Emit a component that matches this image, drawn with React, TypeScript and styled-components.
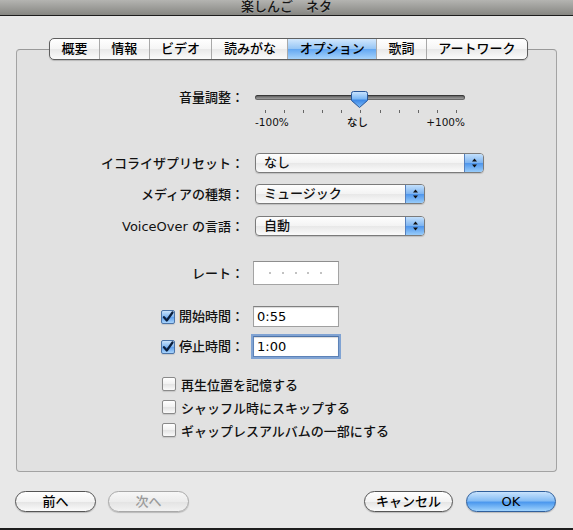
import React from "react";
import styled, { createGlobalStyle } from "styled-components";

const GlobalStyle = createGlobalStyle`
  html, body {
    margin: 0;
    padding: 0;
  }
  body {
    background: #e8e8e8;
    font-family: "DejaVu Sans", "Noto Sans CJK JP", sans-serif;
    font-weight: 500;
    color: #111;
  }
`;

const Window = styled.div`
  width: 573px;
  height: 530px;
  display: flex;
  flex-direction: column;
  background: #e8e8e8;
  overflow: hidden;
`;

const TitleBar = styled.div`
  height: 15px;
  flex-shrink: 0;
  border-bottom: 1px solid #1c1c1c;
  background: linear-gradient(#b4b4b1, #868682);
  display: flex;
  justify-content: center;
  font-size: 13px;
  line-height: 13px;
  color: #151515;
  text-shadow: 0 1px 0 rgba(255, 255, 255, 0.2);
`;

const Main = styled.div`
  display: flex;
  flex-direction: column;
  padding: 22px 16px 0;
`;

const TabRow = styled.div`
  display: flex;
  justify-content: center;
  padding-left: 4px;
  position: relative;
  z-index: 1;
`;

const TabStrip = styled.div`
  display: flex;
  height: 22px;
  box-sizing: border-box;
  border: 1px solid #5e5e5e;
  border-radius: 5px;
  overflow: hidden;
  background: linear-gradient(#ffffff, #f5f5f5 50%, #e9e9e9 52%, #fbfbfb);
  box-shadow: 0 1px 1px rgba(0, 0, 0, 0.18);
`;

const Tab = styled.div<{ $active?: boolean }>`
  padding: 0 11.4px;
  font-size: 13px;
  line-height: 20px;
  color: #000;
  white-space: nowrap;
  & + & {
    border-left: 1px solid #a9a9a9;
  }
  background: ${(p) =>
    p.$active
      ? "linear-gradient(#d2e8fd, #97c6f5 48%, #64a8f2 52%, #a6d3fb)"
      : "transparent"};
`;

const Panel = styled.div`
  margin-top: -11px;
  height: 423px;
  box-sizing: border-box;
  border: 1px solid #a3a3a3;
  border-top-color: #999;
  border-radius: 4px;
  background: #e1e1e1;
  padding-top: 39px;
  display: flex;
  flex-direction: column;
`;

const Row = styled.div<{ $top?: number; $gap?: number; $start?: boolean }>`
  display: flex;
  align-items: ${(p) => (p.$start ? "flex-start" : "center")};
  gap: ${(p) => p.$gap ?? 11}px;
  margin-top: ${(p) => p.$top ?? 0}px;
`;

const Label = styled.div<{ $h?: number }>`
  width: 227px;
  flex-shrink: 0;
  display: flex;
  justify-content: flex-end;
  align-items: center;
  gap: 4px;
  font-size: 13px;
  line-height: ${(p) => p.$h ?? 17}px;
  white-space: nowrap;
`;

const SliderBox = styled.div`
  width: 210px;
  display: flex;
  flex-direction: column;
`;

const TrackArea = styled.div`
  position: relative;
  height: 19px;
  padding-top: 6px;
  box-sizing: border-box;
`;

const Track = styled.div`
  height: 5px;
  border-radius: 3px;
  background: linear-gradient(#4c4c4c, #8c8c8c 60%, #a8a8a8);
  box-shadow: inset 0 0 0 1px rgba(0, 0, 0, 0.35);
`;

const Knob = styled.svg`
  position: absolute;
  left: 96px;
  top: 2px;
`;

const Ticks = styled.div`
  display: flex;
  justify-content: space-between;
  padding: 0 8px 0 10px;
  margin-top: 2px;
  height: 3px;
`;

const Tick = styled.div`
  width: 1px;
  background: #666;
`;

const TickLabels = styled.div`
  display: flex;
  justify-content: space-between;
  margin-top: 4px;
  font-size: 10.5px;
  line-height: 11px;
  color: #111;
`;

const Popup = styled.div<{ $w: number }>`
  width: ${(p) => p.$w}px;
  height: 20px;
  box-sizing: border-box;
  border: 1px solid #7b7b7b;
  border-radius: 4px;
  display: flex;
  overflow: hidden;
  background: linear-gradient(#fefefe, #f3f3f3 50%, #e8e8e8 52%, #fbfbfb);
  box-shadow: 0 1px 1px rgba(0, 0, 0, 0.15);
`;

const PopupText = styled.div`
  flex: 1;
  padding-left: 8px;
  font-size: 13px;
  line-height: 18px;
`;

const PopupArrows = styled.div`
  width: 18px;
  border-left: 1px solid #5580bd;
  background: linear-gradient(#c3e0fc, #7fb5f1 48%, #4f96ec 52%, #98ccfa);
  display: flex;
  align-items: center;
  justify-content: center;
`;

const RatingBox = styled.div`
  width: 86px;
  height: 24px;
  box-sizing: border-box;
  border: 1px solid #a4a4a4;
  border-top-color: #8e8e8e;
  background: #fff;
  display: flex;
  align-items: center;
  gap: 10.75px;
  padding-left: 15px;
`;

const Dot = styled.div`
  width: 2px;
  height: 2px;
  background: #c2c2c2;
`;

const TextField = styled.input<{ $focused?: boolean }>`
  width: 86px;
  height: 21px;
  box-sizing: border-box;
  margin: 0;
  border: 1px solid ${(p) => (p.$focused ? "#5d83b8" : "#a0a0a0")};
  border-top-color: ${(p) => (p.$focused ? "#4d73a8" : "#808080")};
  background: #fff;
  padding: 0 3px;
  font-family: "DejaVu Sans", sans-serif;
  font-size: 13px;
  color: #000;
  outline: none;
  box-shadow: ${(p) =>
    p.$focused
      ? "0 0 0 2px rgba(110, 152, 208, 0.85), inset 0 1px 1px rgba(0,0,0,0.15)"
      : "inset 0 1px 1px rgba(0, 0, 0, 0.15)"};
`;

const Box = styled.div<{ $checked?: boolean }>`
  width: 14px;
  height: 14px;
  box-sizing: border-box;
  border: 1px solid ${(p) => (p.$checked ? "#4c74a8" : "#8a8a8a")};
  border-radius: 2px;
  background: ${(p) =>
    p.$checked
      ? "linear-gradient(#c9e3fc, #7fb5f1 50%, #5d9fee 52%, #a9d4fb)"
      : "linear-gradient(#ffffff, #f1f1f1 50%, #e4e4e4 52%, #fafafa)"};
  display: flex;
  align-items: center;
  justify-content: center;
  flex-shrink: 0;
  box-shadow: 0 1px 1px rgba(0, 0, 0, 0.12);
`;

const Options = styled.div`
  display: flex;
  flex-direction: column;
  gap: 5px;
  margin-top: 18px;
  padding-left: 145px;
`;

const OptionRow = styled.div`
  display: flex;
  align-items: center;
  gap: 5px;
  height: 18px;
  font-size: 13px;
  white-space: nowrap;
`;

const Footer = styled.div`
  flex: 1;
  display: flex;
  align-items: center;
  justify-content: space-between;
  padding: 2px 17px 0 15px;
`;

const ButtonGroup = styled.div<{ $gap: number }>`
  display: flex;
  gap: ${(p) => p.$gap}px;
`;

const PushButton = styled.div<{ $w: number; $kind?: "primary" | "disabled" }>`
  width: ${(p) => p.$w}px;
  height: 21px;
  box-sizing: border-box;
  border-radius: 11px;
  border: 1px solid
    ${(p) =>
      p.$kind === "primary" ? "#2f5f9c" : p.$kind === "disabled" ? "#a9a9a9" : "#555"};
  background: ${(p) =>
    p.$kind === "primary"
      ? "linear-gradient(#c8e3fd, #86bdf5 45%, #4d99ee 55%, #9fd3fd)"
      : p.$kind === "disabled"
      ? "linear-gradient(#f7f7f7, #ececec 50%, #e3e3e3 52%, #f2f2f2)"
      : "linear-gradient(#ffffff, #f3f3f3 50%, #e4e4e4 52%, #fbfbfb)"};
  color: ${(p) => (p.$kind === "disabled" ? "#9a9a9a" : "#000")};
  font-size: 13px;
  line-height: 19px;
  text-align: center;
  box-shadow: 0 1px 1px rgba(0, 0, 0, 0.2);
`;

const BottomEdge = styled.div`
  height: 2px;
  flex-shrink: 0;
  background: #1e1e1e;
`;

const Arrows = () => (
  <svg width="7" height="12" viewBox="0 0 7 12">
    <path d="M3.5 1.5 L6 4.5 H1 Z" fill="#111" />
    <path d="M3.5 10.5 L6 7.5 H1 Z" fill="#111" />
  </svg>
);

const Check = () => (
  <svg width="12" height="12" viewBox="0 0 12 12">
    <path
      d="M2 6.2 L4.8 9.5 L10.5 1.5"
      fill="none"
      stroke="#0c1f3d"
      strokeWidth="2.2"
      strokeLinecap="round"
      strokeLinejoin="round"
    />
  </svg>
);

const tabs = ["概要", "情報", "ビデオ", "読みがな", "オプション", "歌詞", "アートワーク"];

export default function App() {
  return (
    <Window>
      <GlobalStyle />
      <TitleBar>楽しんご　ネタ</TitleBar>
      <Main>
        <TabRow>
          <TabStrip>
            {tabs.map((t) => (
              <Tab key={t} $active={t === "オプション"}>
                {t}
              </Tab>
            ))}
          </TabStrip>
        </TabRow>
        <Panel>
          <Row $start>
            <Label $h={17}>音量調整：</Label>
            <SliderBox>
              <TrackArea>
                <Track />
                <Knob width="17" height="17" viewBox="0 0 17 17">
                  <defs>
                    <linearGradient id="kg" x1="0" y1="0" x2="0" y2="1">
                      <stop offset="0" stopColor="#cde6ff" />
                      <stop offset="0.45" stopColor="#7db8f5" />
                      <stop offset="0.55" stopColor="#3f8ae6" />
                      <stop offset="1" stopColor="#7bbaf7" />
                    </linearGradient>
                  </defs>
                  <path
                    d="M2.5 0.5 H14.5 Q16.5 0.5 16.5 2.5 V9.5 L8.5 16.5 L0.5 9.5 V2.5 Q0.5 0.5 2.5 0.5 Z"
                    fill="url(#kg)"
                    stroke="#29579a"
                  />
                </Knob>
              </TrackArea>
              <Ticks>
                {Array.from({ length: 11 }).map((_, i) => (
                  <Tick key={i} />
                ))}
              </Ticks>
              <TickLabels>
                <span>-100%</span>
                <span>なし</span>
                <span>+100%</span>
              </TickLabels>
            </SliderBox>
          </Row>

          <Row $top={25}>
            <Label>イコライザプリセット：</Label>
            <Popup $w={229}>
              <PopupText>なし</PopupText>
              <PopupArrows>
                <Arrows />
              </PopupArrows>
            </Popup>
          </Row>
          <Row $top={11}>
            <Label>メディアの種類：</Label>
            <Popup $w={170}>
              <PopupText>ミュージック</PopupText>
              <PopupArrows>
                <Arrows />
              </PopupArrows>
            </Popup>
          </Row>
          <Row $top={12}>
            <Label>VoiceOver の言語：</Label>
            <Popup $w={170}>
              <PopupText>自動</PopupText>
              <PopupArrows>
                <Arrows />
              </PopupArrows>
            </Popup>
          </Row>

          <Row $top={25} $gap={9}>
            <Label>レート：</Label>
            <RatingBox>
              {Array.from({ length: 5 }).map((_, i) => (
                <Dot key={i} />
              ))}
            </RatingBox>
          </Row>

          <Row $top={21} $gap={9}>
            <Label>
              <Box $checked>
                <Check />
              </Box>
              開始時間：
            </Label>
            <TextField defaultValue="0:55" readOnly />
          </Row>
          <Row $top={9} $gap={9}>
            <Label>
              <Box $checked>
                <Check />
              </Box>
              停止時間：
            </Label>
            <TextField defaultValue="1:00" readOnly $focused />
          </Row>

          <Options>
            <OptionRow>
              <Box />
              再生位置を記憶する
            </OptionRow>
            <OptionRow>
              <Box />
              シャッフル時にスキップする
            </OptionRow>
            <OptionRow>
              <Box />
              ギャップレスアルバムの一部にする
            </OptionRow>
          </Options>
        </Panel>
      </Main>
      <Footer>
        <ButtonGroup $gap={12}>
          <PushButton $w={81}>前へ</PushButton>
          <PushButton $w={81} $kind="disabled">
            次へ
          </PushButton>
        </ButtonGroup>
        <ButtonGroup $gap={13}>
          <PushButton $w={89}>キャンセル</PushButton>
          <PushButton $w={90} $kind="primary">
            OK
          </PushButton>
        </ButtonGroup>
      </Footer>
      <BottomEdge />
    </Window>
  );
}
